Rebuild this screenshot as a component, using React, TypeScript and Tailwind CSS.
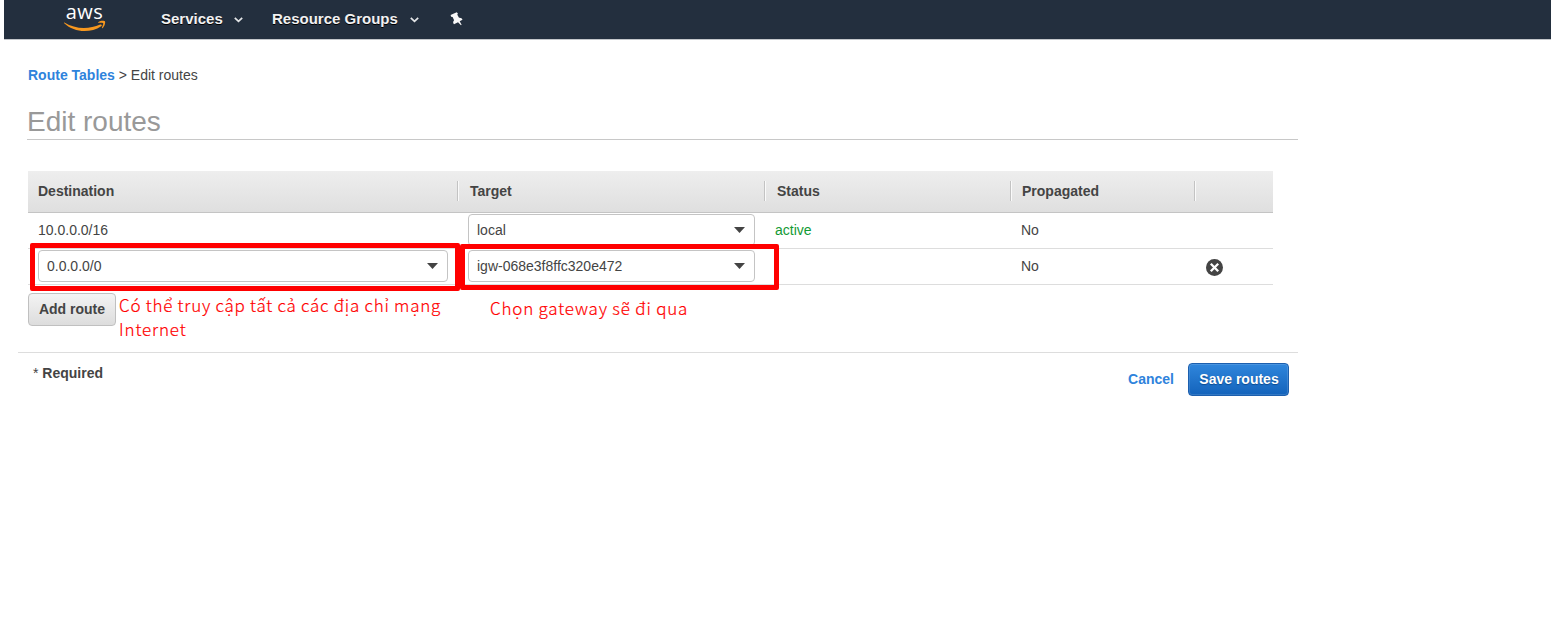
import type { ReactNode } from "react";

const GRID = "grid grid-cols-[430px_307px_246px_184px_78px]";

function Chevron() {
  return (
    <svg width="9" height="6" viewBox="0 0 9 6" fill="none" className="mt-px">
      <path d="M0.8 0.8 4.5 4.4 8.2 0.8" stroke="#e4e6e8" strokeWidth="1.7" />
    </svg>
  );
}

function AwsLogo() {
  return (
    <div className="flex w-[42px] flex-col items-center">
      <span className="h-[21px] pr-px text-[20px] leading-[23px] font-normal tracking-[0.4px] text-white [font-family:'Open_Sans','Noto_Sans',sans-serif] [text-shadow:none]">
        aws
      </span>
      <svg width="42" height="12" viewBox="0 0 42 12" className="-mt-px">
        <path d="M0.4 2.6C11 9.2 24.5 9.8 36.2 4.6 37.6 4 38.4 5.4 37.2 6.2 26 13.6 10 12.6 0.2 3.3-.2 2.8 0 2.4.4 2.6Z" fill="#f7981f" />
        <path d="M34.2 2.2C36.5.6 40.2.6 41 1.4 41.6 2.6 40.4 6.4 38.6 8 38 8.4 37.8 8.1 38 7.6 38.8 5.7 39.6 3.7 39.1 3.1 38.5 2.5 36.2 2.6 34.5 2.8 34 2.8 33.8 2.5 34.2 2.2Z" fill="#f7981f" />
      </svg>
    </div>
  );
}

function Pin() {
  return (
    <svg width="13" height="14" viewBox="0 0 13 14" fill="#f8f8f8">
      <path d="M.6 3.1 6.7.2 7.9 1.4 7.3 2.7 9 5.8C10.6 5.5 12.1 6.3 12.5 7.7L9.7 9.3 11.6 12.8 11 13.3 8 10.2 4 12.2C2.8 10.9 2.9 9.3 4.1 8.2L2.6 4.9 1.1 4.8Z" />
    </svg>
  );
}

function Select({ value, className }: { value: string; className: string }) {
  return (
    <div className={`flex h-8 items-center justify-between rounded border border-[#c4c4c4] bg-white pr-[9px] pl-2 ${className}`}>
      <span>{value}</span>
      <svg width="11" height="6" viewBox="0 0 11 6" className="mt-px">
        <path d="M0 0H11L5.5 6Z" fill="#444" />
      </svg>
    </div>
  );
}

function HeadCell({ children, last }: { children?: ReactNode; last?: boolean }) {
  return (
    <div className={`flex h-[20px] items-center pl-[10px] ${last ? "" : "border-r border-[#c3c3c3] shadow-[1px_0_0_#fafafa]"}`}>
      {children}
    </div>
  );
}

function RemoveIcon() {
  return (
    <svg width="17" height="17" viewBox="0 0 17 17">
      <circle cx="8.5" cy="8.5" r="8.5" fill="#444" />
      <path d="M4.8 4.8 12.2 12.2M12.2 4.8 4.8 12.2" stroke="#fff" strokeWidth="2.3" />
    </svg>
  );
}

const NOTE =
  "absolute text-[17px] leading-6 font-light whitespace-nowrap text-[#ff0000] [font-family:'Noto_Sans_CJK_SC','Open_Sans',sans-serif] [-webkit-text-stroke:0.2px_#ff0000]";

export default function App() {
  return (
    <div className="h-[634px] w-[1551px] overflow-hidden bg-white text-[14px] leading-5 text-[#444] [font-family:'Liberation_Sans',Arial,sans-serif]">
      <header className="ml-1 flex h-10 items-center border-b border-[#c3c6ca] bg-[#232f3e] text-[15px] font-bold text-[#f2f2f2] [text-shadow:0_1px_0_#000]">
        <div className="ml-[60px] flex h-full items-start">
          <AwsLogo />
        </div>
        <nav className="-mt-px ml-[55px] flex items-center">
          <span className="w-[73px]">Services</span>
          <Chevron />
          <span className="ml-[29px] w-[138px]">Resource Groups</span>
          <Chevron />
          <span className="ml-[31px]">
            <Pin />
          </span>
        </nav>
      </header>

      <main className="relative pt-[25px] pl-[18px]">
        <div className="ml-[10px]">
          <a className="font-bold text-[#2e83dc]">Route Tables</a> &gt; Edit routes
        </div>
        <h1 className="mt-[18px] ml-[9px] flex h-[37px] w-[1271px] items-center border-b border-[#c8c8c8] pt-[2px] text-[28px] leading-8 text-[#999]">
          Edit routes
        </h1>

        <div className="mt-[31px] ml-[10px] w-[1245px]">
          <div className={`${GRID} h-[42px] items-center border-b border-[#c4c4c4] bg-linear-to-b from-[#eeeeee] to-[#dfdfdf] pb-px font-bold`}>
            <HeadCell>Destination</HeadCell>
            <HeadCell><span className="pl-[2px]">Target</span></HeadCell>
            <HeadCell><span className="pl-[2px]">Status</span></HeadCell>
            <HeadCell><span className="pl-px">Propagated</span></HeadCell>
            <HeadCell last />
          </div>
          <div className={`${GRID} h-9 items-center border-b border-[#dddddd] pb-[2px]`}>
            <div className="pl-[10px]">10.0.0.0/16</div>
            <div className="pl-[10px]"><Select value="local" className="w-[287px]" /></div>
            <div className="pl-[10px] text-[#129a35]">active</div>
            <div className="pl-[10px]">No</div>
            <div />
          </div>
          <div className={`${GRID} h-9 items-center border-b border-[#dddddd] pb-[2px]`}>
            <div className="pl-[10px]"><Select value="0.0.0.0/0" className="w-[410px]" /></div>
            <div className="pl-[10px]"><Select value="igw-068e3f8ffc320e472" className="w-[287px]" /></div>
            <div />
            <div className="pl-[10px]">No</div>
            <div className="pt-1 pl-[11px]"><RemoveIcon /></div>
          </div>
        </div>

        <button className="mt-2 ml-[10px] flex h-[33px] w-[88px] items-center justify-center rounded border border-[#c0c0c0] bg-linear-to-b from-[#f3f3f3] to-[#dddddd] pb-[2px] font-bold">
          Add route
        </button>

        <footer className="mt-[26px] flex h-[60px] w-[1280px] items-start justify-between border-t border-[#dddddd] pt-[10px] pr-[9px] pl-[15px] font-bold">
          <div>
            <span className="font-normal">*</span> Required
          </div>
          <div className="flex items-center gap-[14px]">
            <a className="pb-[2px] text-[#2e83dc]">Cancel</a>
            <button className="flex h-[33px] w-[101px] items-center justify-center rounded border border-[#1c5fae] bg-linear-to-b from-[#2f86dc] to-[#1363bb] pb-[2px] pl-px text-white shadow-[inset_0_0_0_1px_rgba(255,255,255,0.13)] [text-shadow:0_1px_1px_#0b4a90]">
              Save routes
            </button>
          </div>
        </footer>

        <div className="absolute top-[203px] left-[30px] h-12 w-[430px] rounded-[2px] border-[5px] border-[#ff0000]" />
        <div className="absolute top-[204px] left-[460px] h-[46px] w-[319px] rounded-[2px] border-[5px] border-[#ff0000]" />
        <p className={`${NOTE} top-[253px] left-[119px] tracking-[0.74px]`}>
          Có thể truy cập tất cả các địa chỉ mạng
          <br />
          <span className="tracking-[0.85px]">Internet</span>
        </p>
        <p className={`${NOTE} top-[256px] left-[490px] tracking-[0.8px]`}>Chọn gateway sẽ đi qua</p>
      </main>
    </div>
  );
}
